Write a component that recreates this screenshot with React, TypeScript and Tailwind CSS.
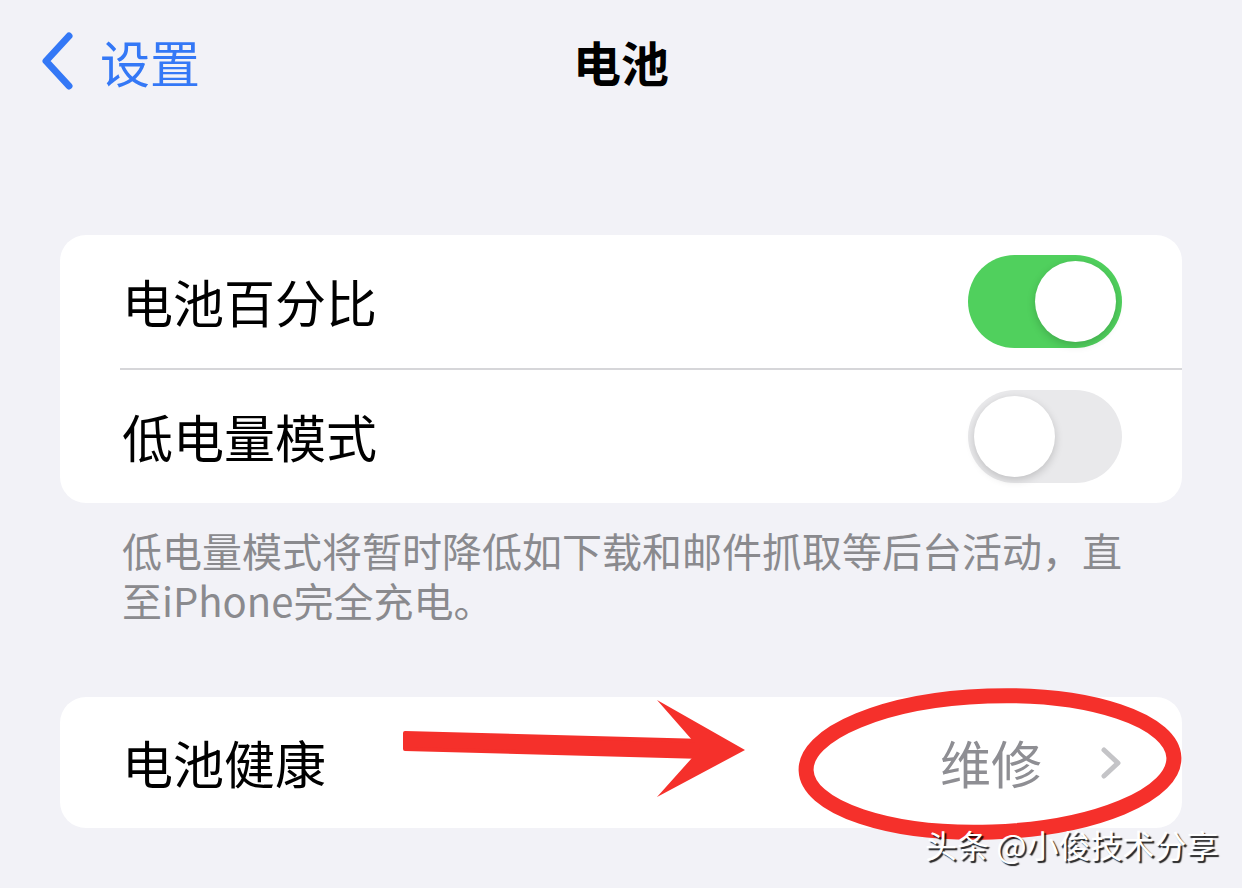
import React from "react";

const cjk = { fontFamily: '"Noto Sans CJK SC", "Noto Sans", sans-serif' };

function Toggle({ on }: { on: boolean }) {
  return (
    <div
      className={`relative h-[93px] w-[154px] rounded-full ${on ? "bg-[#50d05d]" : "bg-[#e9e9eb]"}`}
    >
      <div
        className={`absolute top-[6px] h-[81px] w-[81px] rounded-full bg-white shadow-[0_3px_8px_rgba(0,0,0,0.18)] ${on ? "right-[6px]" : "left-[6px]"}`}
      />
    </div>
  );
}

export default function App() {
  return (
    <div
      className="relative h-[888px] w-[1242px] overflow-hidden bg-[#f2f2f7] text-black"
      style={cjk}
    >
      {/* nav bar */}
      <div className="relative flex h-[122px] items-center px-[40px]">
        <div className="flex items-center gap-[26px] text-[#3478f6]">
          <svg width="34" height="58" viewBox="0 0 34 58" fill="none">
            <path
              d="M29 4 L6 29 L29 54"
              stroke="#3478f6"
              strokeWidth="7"
              strokeLinecap="round"
              strokeLinejoin="round"
            />
          </svg>
          <span className="text-[50px] leading-none">设置</span>
        </div>
        <div className="absolute inset-x-0 top-0 flex h-[122px] items-center justify-center">
          <span className="text-[48px] font-bold leading-none">电池</span>
        </div>
      </div>

      {/* card 1 */}
      <div className="mx-[60px] mt-[113px] overflow-hidden rounded-[26px] bg-white">
        <div className="flex h-[133px] items-center justify-between pl-[62px] pr-[60px]">
          <span className="text-[51px] leading-none">电池百分比</span>
          <Toggle on />
        </div>
        <div className="ml-[60px] h-[2px] bg-[#d6d6d9]" />
        <div className="flex h-[133px] items-center justify-between pl-[62px] pr-[60px]">
          <span className="text-[51px] leading-none">低电量模式</span>
          <Toggle on={false} />
        </div>
      </div>

      {/* footer */}
      <div className="ml-[122px] mt-[22px] text-[40px] text-[#8a8a8e]">
        <div className="leading-[50px]">低电量模式将暂时降低如下载和邮件抓取等后台活动，直</div>
        <div className="leading-[50px]">至iPhone完全充电。</div>
      </div>

      {/* card 2 */}
      <div className="mx-[60px] mt-[72px] flex h-[131px] items-center justify-between rounded-[26px] bg-white pl-[62px] pr-[60px]">
        <span className="text-[51px] leading-none">电池健康</span>
        <div className="flex items-center gap-[58px]">
          <span className="text-[51px] leading-none text-[#8e8e93]">维修</span>
          <svg width="22" height="34" viewBox="0 0 22 34" fill="none">
            <path
              d="M4 4 L18 17 L4 30"
              stroke="#c4c4c7"
              strokeWidth="5"
              strokeLinecap="round"
              strokeLinejoin="round"
            />
          </svg>
        </div>
      </div>

      {/* annotation overlay */}
      <svg
        className="pointer-events-none absolute left-0 top-0"
        width="1242"
        height="888"
        viewBox="0 0 1242 888"
      >
        <path
          d="M405 733 L705 741 L704 757 L405 749 Z"
          fill="#f5302b"
          strokeLinejoin="round"
          stroke="#f5302b"
          strokeWidth="4"
        />
        <path d="M657 700 L745 750 L657 797 L700 749 Z" fill="#f5302b" />
        <ellipse
          cx="990"
          cy="764"
          rx="184"
          ry="68"
          fill="none"
          stroke="#f5302b"
          strokeWidth="15"
          transform="rotate(-2 990 764)"
        />
      </svg>

      {/* watermark */}
      <div
        className="absolute left-[925px] top-[828px] text-[32px] leading-none text-white"
        style={{ textShadow: "2px 2px 1px rgba(0,0,0,0.85)" }}
      >
        头条 @小俊技术分享
      </div>
    </div>
  );
}
